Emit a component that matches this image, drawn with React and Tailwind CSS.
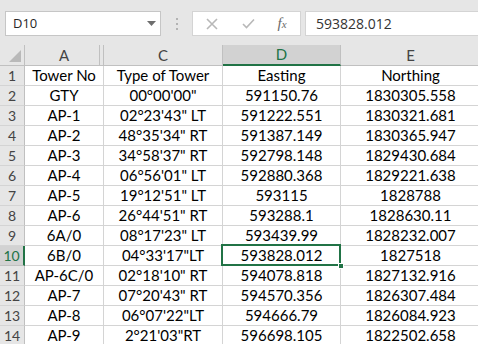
import { useState } from "react";

const rows = [
  ["Tower No", "Type of Tower", "Easting", "Northing"],
  ["GTY", "00°00'00\"", "591150.76", "1830305.558"],
  ["AP-1", "02°23'43\" LT", "591222.551", "1830321.681"],
  ["AP-2", "48°35'34\" RT", "591387.149", "1830365.947"],
  ["AP-3", "34°58'37\" RT", "592798.148", "1829430.684"],
  ["AP-4", "06°56'01\" LT", "592880.368", "1829221.638"],
  ["AP-5", "19°12'51\" LT", "593115", "1828788"],
  ["AP-6", "26°44'51\" RT", "593288.1", "1828630.11"],
  ["6A/0", "08°17'23\" LT", "593439.99", "1828232.007"],
  ["6B/0", "04°33'17\"LT", "593828.012", "1827518"],
  ["AP-6C/0", "02°18'10\" RT", "594078.818", "1827132.916"],
  ["AP-7", "07°20'43\" RT", "594570.356", "1826307.484"],
  ["AP-8", "06°07'22\"LT", "594666.79", "1826084.923"],
  ["AP-9", "2°21'03\"RT", "596698.105", "1822502.658"],
];

const widths = ["w-[79px]", "w-[119px]", "w-[118px]", "w-[140px]"];

export default function App() {
  const [selected] = useState({ row: 10, col: 2 });

  return (
    <div className="w-[478px] h-[344px] overflow-hidden bg-white font-['Lato',sans-serif]">
      {/* formula bar */}
      <div className="h-[45px] bg-[#e6e6e6] flex items-start pt-[11px] pl-[5px] font-['Open_Sans',sans-serif]">
        <div className="w-[156px] h-[25px] bg-white border border-[#c6c6c6] flex items-center pl-[7px] pr-[4px] text-[13px] text-[#262626]">
          <span className="flex-1">D10</span>
          <svg width="9" height="5" viewBox="0 0 9 5">
            <path d="M0 0 H9 L4.5 5 Z" fill="#6e6e6e" />
          </svg>
        </div>
        <div className="w-[31px] h-[25px] flex flex-col items-center justify-center gap-[3px]">
          <span className="w-[2px] h-[2px] bg-[#b3b3b3]" />
          <span className="w-[2px] h-[2px] bg-[#b3b3b3]" />
          <span className="w-[2px] h-[2px] bg-[#b3b3b3]" />
        </div>
        <div className="w-[109px] h-[25px] bg-white border border-[#d4d4d4] flex items-center">
          <div className="w-[38px] flex justify-center">
            <svg width="12" height="12" viewBox="0 0 12 12">
              <path d="M1 1 L11 11 M11 1 L1 11" stroke="#b8b8b8" strokeWidth="1.6" />
            </svg>
          </div>
          <div className="w-[34px] flex justify-center">
            <svg width="13" height="11" viewBox="0 0 13 11">
              <path d="M1 6 L4.5 9.5 L12 1.5" stroke="#b8b8b8" strokeWidth="1.6" fill="none" />
            </svg>
          </div>
          <div className="w-[34px] flex justify-center font-['Liberation_Serif',serif] italic text-[#6a6a6a]">
            <span className="text-[15px] leading-none">f</span>
            <span className="text-[11px] leading-none mt-[3px]">x</span>
          </div>
        </div>
        <div className="ml-[4px] flex-1 h-[25px] bg-white border-y border-l border-[#d4d4d4] flex items-center pl-[10px] text-[14px] text-[#333]">
          593828.012
        </div>
      </div>

      {/* column headers */}
      <div className="flex h-[21px] bg-[#e6e6e6] text-[15px] text-[#444]">
        <div className="w-[25px] shrink-0 border-r border-b border-[#c0c0c0] relative">
          <svg className="absolute right-[3px] bottom-[3px]" width="12" height="12" viewBox="0 0 12 12">
            <path d="M12 0 V12 H0 Z" fill="#b9b9b9" />
          </svg>
        </div>
        {["A", "C", "D", "E"].map((c, i) => (
          <div
            key={c}
            className={
              widths[i] +
              " shrink-0 flex items-center justify-center " +
              (i === selected.col
                ? "bg-[#d2d2d2] text-[#217346] border-b-2 border-[#217346] border-r border-r-[#c0c0c0]"
                : "border-r border-b border-[#c0c0c0]") +
              (i === 0 ? " shadow-[inset_-3px_0_0_#e6e6e6,inset_-4px_0_0_#c0c0c0]" : "")
            }
          >
            {c}
          </div>
        ))}
      </div>

      {/* data rows */}
      {rows.map((r, ri) => {
        const n = ri + 1;
        const rowSel = n === selected.row;
        return (
          <div key={n} className="flex h-[20px] text-[15px] text-black">
            <div
              className={
                "w-[25px] shrink-0 flex items-center justify-center border-b text-[14px] " +
                (rowSel
                  ? "bg-[#d2d2d2] text-[#217346] border-b-[#c0c0c0] border-r-2 border-r-[#217346]"
                  : "bg-[#e6e6e6] text-[#444] border-r border-[#c0c0c0] border-b-[#d4d4d4]")
              }
            >
              {n}
            </div>
            {r.map((v, ci) => (
              <div
                key={ci}
                className={
                  widths[ci] +
                  " shrink-0 flex items-center justify-center border-r border-b border-[#d4d4d4] relative"
                }
              >
                {v}
                {rowSel && ci === selected.col && (
                  <>
                    <div className="absolute z-10 -left-[2px] -top-[2px] -right-[1px] -bottom-[1px] border-2 border-[#217346] pointer-events-none" />
                    <div className="absolute z-10 -right-[4px] -bottom-[4px] w-[6px] h-[6px] bg-[#217346] border border-white" />
                  </>
                )}
              </div>
            ))}
          </div>
        );
      })}
    </div>
  );
}
